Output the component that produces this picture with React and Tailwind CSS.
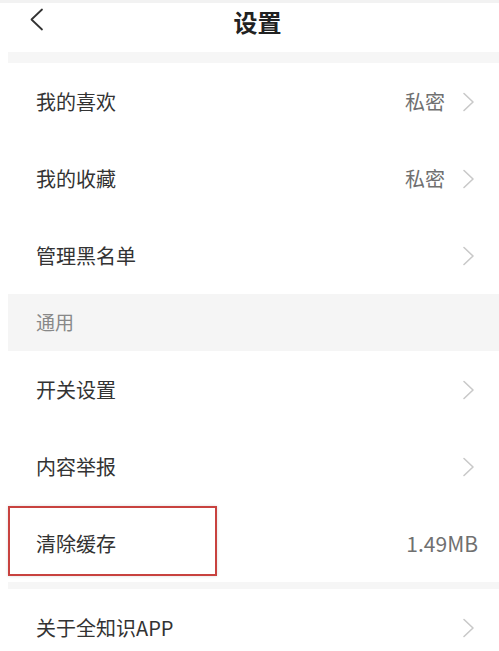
import React from "react";

const Chevron = () => (
  <svg width="13" height="20" viewBox="0 0 13 20" fill="none" className="shrink-0">
    <path d="M2 1.5 L11 10 L2 18.5" stroke="#c9c9c9" strokeWidth="1.6" strokeLinecap="round" strokeLinejoin="round" />
  </svg>
);

const Row = ({ label, value, arrow = true, highlight = false }) => (
  <div className="relative h-[77px] flex items-center pl-[28px] pr-[24px]">
    <span className="text-[20px] text-[#333333]">{label}</span>
    <div className="ml-auto flex items-center gap-[17px]">
      {value && <span className={`text-[#707070] ${arrow ? "text-[20px]" : "text-[21px] mr-[-3px]"}`}>{value}</span>}
      {arrow && <Chevron />}
    </div>
    {highlight && (
      <div className="absolute left-0 top-[1px] w-[209px] h-[70px] border-2 border-[#c8423f] shadow-[0_0_3px_rgba(0,0,0,0.15)]"></div>
    )}
  </div>
);

export default function App() {
  return (
    <div
      className="w-[499px] h-[651px] overflow-hidden bg-white"
      style={{ fontFamily: '"Noto Sans CJK SC", "Noto Sans", sans-serif' }}
    >
      <div className="h-[3px] bg-[#f2f2f2]"></div>
      <div className="relative h-[38px] flex items-center justify-center pl-[16px]">
        <svg width="16" height="24" viewBox="0 0 16 24" fill="none" className="absolute left-[29px] top-[5px]">
          <path d="M13 1.5 L2.5 11.5 L13 21.5" stroke="#333333" strokeWidth="1.8" strokeLinecap="round" strokeLinejoin="round" />
        </svg>
        <h1 className="text-[24px] font-bold text-[#222222] leading-none">设置</h1>
      </div>
      <div className="h-[11px]"></div>

      <div className="ml-[8px]">
        <div className="h-[11px] bg-[#f6f6f6]"></div>
        <Row label="我的喜欢" value="私密" />
        <Row label="我的收藏" value="私密" />
        <Row label="管理黑名单" />
        <div className="h-[57px] bg-[#f5f5f5] flex items-center pl-[28px]">
          <span className="text-[19px] text-[#888888]">通用</span>
        </div>
        <Row label="开关设置" />
        <Row label="内容举报" />
        <Row label="清除缓存" value="1.49MB" arrow={false} highlight />
        <div className="h-[7px] bg-[#f6f6f6]"></div>
        <Row label="关于全知识APP" />
      </div>
    </div>
  );
}
